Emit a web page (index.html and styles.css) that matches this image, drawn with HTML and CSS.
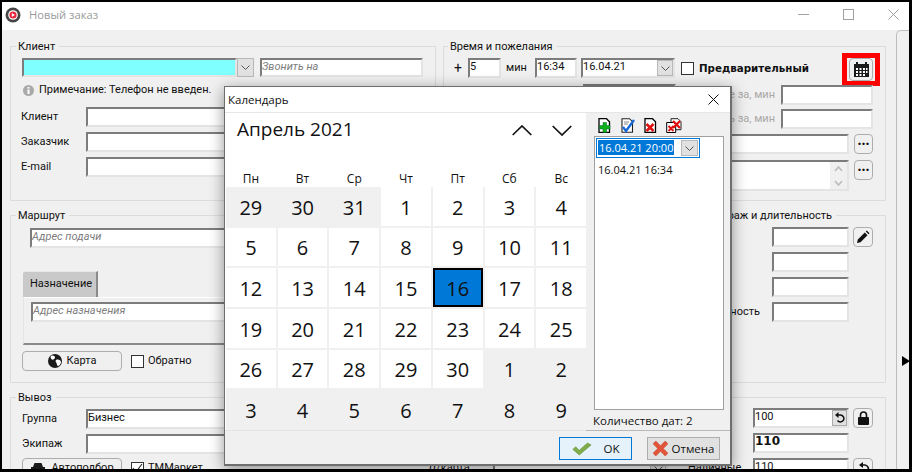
FILE: index.html
```html
<!DOCTYPE html>
<html lang="ru">
<head>
<meta charset="utf-8">
<title>Новый заказ</title>
<link rel="stylesheet" href="styles.css">
</head>
<body>
<div class="window">
  <header class="titlebar">
    <svg class="app-icon" width="16" height="16" viewBox="0 0 16 16"><circle cx="8" cy="8" r="7.500" fill="#464646"/><circle cx="8" cy="8" r="4.800" fill="#fff"/><circle cx="8" cy="8" r="3.600" fill="#e8273f"/><path d="M6.800 6v4l3-2z" fill="#fff"/></svg>
    <span class="title">Новый заказ</span>
    <div class="win-controls">
      <svg width="11" height="11" viewBox="0 0 11 11"><path d="M0 5.500h11" stroke="#a0a0a0"/></svg>
      <svg width="11" height="11" viewBox="0 0 11 11"><rect x=".5" y=".5" width="10" height="10" fill="none" stroke="#a0a0a0"/></svg>
      <svg width="11" height="11" viewBox="0 0 11 11"><path d="M.5.5l10 10M10.500.5l-10 10" stroke="#a0a0a0"/></svg>
    </div>
  </header>

  <div class="body">
    <main class="form">
      <div class="col col-left">
        <section class="group g-client">
          <div class="legend">Клиент</div>
          <div class="row r-phone">
            <div class="inp phone"></div>
            <div class="drop"><svg width="9" height="5" viewBox="0 0 9 5"><path d="M.5.5l4 4 4-4" fill="none" stroke="#555"/></svg></div>
            <div class="inp ph call">Звонить на</div>
          </div>
          <div class="row r-note">
            <svg class="info" width="11" height="11" viewBox="0 0 11 11"><circle cx="5.500" cy="5.500" r="5.500" fill="#a9a9a9"/><rect x="4.500" y="2" width="2" height="1.600" fill="#fff"/><rect x="4.500" y="4.600" width="2" height="4.400" fill="#fff"/></svg>
            <span>Примечание: Телефон не введен.</span>
          </div>
          <div class="row r-field"><label>Клиент</label><div class="inp grow"></div></div>
          <div class="row r-field"><label>Заказчик</label><div class="inp grow"></div></div>
          <div class="row r-field"><label>E-mail</label><div class="inp grow"></div></div>
        </section>

        <section class="group g-route">
          <div class="legend">Маршрут</div>
          <div class="inp ph addr-from">Адрес подачи</div>
          <div class="tab">Назначение</div>
          <div class="tab-panel"><div class="inp ph">Адрес назначения</div></div>
          <div class="row r-map">
            <button class="btn wide"><svg width="14" height="14" viewBox="0 0 14 14"><circle cx="7" cy="7" r="7" fill="#1a1a1a"/><path d="M3 2c2-1 4 0 4 1.500S5 6 4 5.500 2 3 3 2zM8 6c2-1 5 0 5 2s-2 4-3 4-1-2-1.500-3S7 7 8 6z" fill="#fff"/></svg><span>Карта</span></button>
            <span class="check"></span><span>Обратно</span>
          </div>
        </section>

        <section class="group g-pickup">
          <div class="legend">Вывоз</div>
          <div class="row r-field tight"><label>Группа</label><div class="inp grow">Бизнес</div></div>
          <div class="row r-field tight"><label>Экипаж</label><div class="inp grow"></div></div>
          <div class="row r-map low">
            <button class="btn wide"><svg width="16" height="14" viewBox="0 0 16 14"><path d="M3 6l1.500-4h7L13 6h2v6H1V6z" fill="#1a1a1a"/></svg><span>Автоподбор</span></button>
            <span class="check"><svg width="11" height="11" viewBox="0 0 11 11"><path d="M1 5l3 4 6-8" fill="none" stroke="#333" stroke-width="1.200"/></svg></span><span>ТММаркет</span>
          </div>
        </section>
      </div>

      <div class="col col-right">
        <section class="group g-time">
          <div class="legend">Время и пожелания</div>
          <div class="row r-time">
            <span class="plus">+</span>
            <div class="inp mins">5</div>
            <span class="unit">мин</span>
            <div class="inp clock">16:34</div>
            <div class="inp date">16.04.21<span class="drop inner"><svg width="9" height="5" viewBox="0 0 9 5"><path d="M.5.5l4 4 4-4" fill="none" stroke="#555"/></svg></span></div>
            <span class="check"></span>
            <strong class="pre">Предварительный</strong>
            <div class="cal-frame"><button class="square"><svg width="17" height="17" viewBox="0 0 17 17"><path d="M1 3h15v13H1z" fill="#1a1a1a"/><path d="M4 1v3M13 1v3" stroke="#1a1a1a" stroke-width="2"/><path d="M3 7h2v2H3zM6.500 7h2v2h-2zM10 7h2v2h-2zM13 7h1.500v2H13zM3 10h2v2H3zM6.500 10h2v2h-2zM10 10h2v2h-2zM13 10h1.500v2H13zM3 13h2v2H3zM6.500 13h2v2h-2zM10 13h2v2h-2z" fill="#fff"/></svg></button></div>
          </div>
          <div class="row r-sub"><div class="inp under"></div><span class="muted">Напомнить заранее за, мин</span><div class="inp small"></div></div>
          <div class="row r-sub2"><span class="muted">Отправить за, мин</span><div class="inp small"></div></div>
          <div class="row r-more"><div class="inp grow"></div><button class="square dots">···</button></div>
          <div class="row r-more memo"><div class="inp grow memo-box"><span class="scroll"><svg width="9" height="30" viewBox="0 0 9 30"><path d="M1 10l3.500-4L8 10M1 20l3.500 4L8 20" fill="none" stroke="#bbb" stroke-width="1.500"/></svg></span></div><button class="square dots">···</button></div>
        </section>

        <div class="split">
          <section class="group g-mid"></section>
          <section class="group g-metr">
            <div class="legend">Метраж и длительность</div>
            <div class="row r-metr"><div class="inp metr"></div><button class="square"><svg width="14" height="14" viewBox="0 0 14 14"><path d="M1 13l.8-3.500 7-7 2.700 2.700-7 7zM9.800 1.500l1-1 2.700 2.700-1 1z" fill="#111"/></svg></button></div>
            <div class="row r-metr"><div class="inp metr"></div></div>
            <div class="row r-metr"><div class="inp metr"></div></div>
            <div class="row r-metr"><label>Длительность</label><div class="inp metr"></div></div>
          </section>
        </div>

        <section class="group g-pay">
          <div class="pay-cols">
            <div class="pay-left"><span class="cardlabel">Д/карта</span><div class="inp cardsel"><span class="drop inner"><svg width="9" height="5" viewBox="0 0 9 5"><path d="M.5.5l4 4 4-4" fill="none" stroke="#555"/></svg></span></div></div>
            <div class="pay-right">
              <div class="row r-pay"><div class="inp sum">100<span class="reset"><svg width="11" height="12" viewBox="0 0 11 12"><path d="M2 3h4.500a3.500 3.500 0 1 1-3 5.500" fill="none" stroke="#111" stroke-width="1.500"/><path d="M4.500 0v6L1 3z" fill="#111"/></svg></span></div><button class="square"><svg width="13" height="14" viewBox="0 0 13 14"><path d="M3.500 6V4a3 3 0 0 1 6 0v2" fill="none" stroke="#111" stroke-width="1.600"/><rect x="1" y="6" width="11" height="8" rx="1" fill="#111"/></svg></button></div>
              <div class="row r-pay"><div class="inp sum total">110</div></div>
              <div class="row r-pay"><label>Наличные</label><div class="inp sum">110</div><button class="square"><svg width="13" height="13" viewBox="0 0 13 13"><path d="M3 3h5a4 4 0 1 1-4 6" fill="none" stroke="#111" stroke-width="1.600"/><path d="M6 0v6L2 3z" fill="#111"/></svg></button></div>
            </div>
          </div>
        </section>
      </div>
    </main>
    <aside class="side-rail"><svg class="rail-arrow" width="8" height="10" viewBox="0 0 8 10"><path d="M0 0l8 5-8 5z" fill="#000"/></svg></aside>
  </div>

  <div class="dialog">
    <div class="dlg-title"><span>Календарь</span><svg width="11" height="11" viewBox="0 0 11 11"><path d="M.5.5l10 10M10.500.5l-10 10" stroke="#111" stroke-width="1"/></svg></div>
    <div class="dlg-main">
      <div class="calendar">
        <div class="cal-head">
          <span class="month">Апрель 2021</span>
          <div class="arrows">
            <svg width="20" height="11" viewBox="0 0 20 11"><path d="M.7 10L10 1l9.300 9" fill="none" stroke="#111" stroke-width="1.700"/></svg>
            <svg width="20" height="11" viewBox="0 0 20 11"><path d="M.7 1L10 10l9.300-9" fill="none" stroke="#111" stroke-width="1.700"/></svg>
          </div>
        </div>
        <div class="weekdays"><span>Пн</span><span>Вт</span><span>Ср</span><span>Чт</span><span>Пт</span><span>Сб</span><span>Вс</span></div>
        <div class="days">
          <span class="off">29</span><span class="off">30</span><span class="off">31</span><span>1</span><span>2</span><span>3</span><span>4</span>
          <span>5</span><span>6</span><span>7</span><span>8</span><span>9</span><span>10</span><span>11</span>
          <span>12</span><span>13</span><span>14</span><span>15</span><span class="today">16</span><span>17</span><span>18</span>
          <span>19</span><span>20</span><span>21</span><span>22</span><span>23</span><span>24</span><span>25</span>
          <span>26</span><span>27</span><span>28</span><span>29</span><span>30</span><span class="off">1</span><span class="off">2</span>
          <span class="off">3</span><span class="off">4</span><span class="off">5</span><span class="off">6</span><span class="off">7</span><span class="off">8</span><span class="off">9</span>
        </div>
      </div>
      <div class="dates">
        <div class="tools">
          <svg width="14" height="15" viewBox="0 0 14 15"><path d="M1 .7h7.500l3 3v10.600H1z" fill="#fff" stroke="#000" stroke-width="1.300"/><path d="M5 4.500h3.500v3H12v3.500H8.500v3.500H5V11H1.500V7.500H5z" fill="#0fb01a" stroke="#063" stroke-width=".5"/></svg>
          <svg width="14" height="15" viewBox="0 0 14 15"><path d="M1 .7h7.500l3 3v10.600H1z" fill="#fff" stroke="#222" stroke-width="1.100"/><path d="M3 4h5M3 6h4" stroke="#888"/><path d="M2 9l3 4 8-11" fill="none" stroke="#1668d8" stroke-width="2.300"/></svg>
          <svg width="13" height="15" viewBox="0 0 13 15"><path d="M1 .7h7.500l3 3v10.600H1z" fill="#fff" stroke="#000" stroke-width="1.300"/><path d="M2.500 6l7 7M9.500 6l-7 7" stroke="#e01010" stroke-width="2.500"/></svg>
          <svg width="16" height="15" viewBox="0 0 16 15"><path d="M5 .7h7l3 3v8H5z" fill="#fff" stroke="#222"/><path d="M.7 4.500h7l2 2v8h-9z" fill="#fff" stroke="#000"/><path d="M7 3l7 7M14 3l-7 7" stroke="#e01010" stroke-width="2.300"/><path d="M2.500 8l5 5M7.500 8l-5 5" stroke="#e01010" stroke-width="1.800"/></svg>
        </div>
        <div class="listbox">
          <div class="date-edit"><span class="sel">16.04.21 20:00</span><span class="drop inner"><svg width="9" height="5" viewBox="0 0 9 5"><path d="M.5.5l4 4 4-4" fill="none" stroke="#555"/></svg></span></div>
          <div class="date-item">16.04.21 16:34</div>
        </div>
        <div class="count">Количество дат: 2</div>
      </div>
    </div>
    <div class="dlg-foot">
      <button class="dlg-btn ok"><svg width="20" height="14" viewBox="0 0 22 15"><path d="M1 8l3-3 4 4 9-8 4 2-13 11z" fill="#7fae4a" stroke="#5c8a30" stroke-width=".6"/></svg><span>OK</span></button>
      <button class="dlg-btn cancel"><svg width="15" height="15" viewBox="0 0 16 16"><path d="M3 0l5 5 5-5 3 3-5 5 5 5-3 3-5-5-5 5-3-3 5-5-5-5z" fill="#e2553a" stroke="#c03a20" stroke-width=".5"/></svg><span>Отмена</span></button>
    </div>
  </div>
</div>
</body>
</html>
```

FILE: styles.css
```css
* { box-sizing: border-box; }
html, body { margin: 0; height: 100%; overflow: hidden; }
body {
  background: #000;
  padding: 2px 2px 3px 2px;
  font: 11.5px/14px "Open Sans", "Noto Sans", sans-serif;
  color: #111;
}
.window {
  position: relative;
  width: 907px;
  height: 467px;
  overflow: hidden;
  background: #f0f0f0;
  display: flex;
  flex-direction: column;
}
.titlebar {
  flex: none;
  height: 28px;
  background: #fff;
  display: flex;
  align-items: center;
  padding: 0 10px 3px 3px;
  color: #9a9a9a;
}
.app-icon { margin-right: 8px; }
.title { font-size: 11.200px; margin-top: 1px; }
.win-controls { margin-left: auto; display: flex; gap: 34px; }
.body { flex: 1; display: flex; min-height: 0; }
.form {
  width: 894px;
  padding: 16px 0 0 8px;
  display: grid;
  grid-template-columns: 426px 443px;
  column-gap: 7px;
  align-items: start;
  font-family: Roboto, "Open Sans", sans-serif;
  font-size: 11px;
}
.col { display: flex; flex-direction: column; gap: 14px; }
.side-rail {
  flex: 1;
  border-left: 1px solid #bdbdbd;
  border-top: 1px solid #bdbdbd;
  border-top-left-radius: 5px;
  position: relative;
}
.rail-arrow { position: absolute; left: 5px; top: 325px; }
.group { border: 1px solid #dcdcdc; padding: 0 7px; }
.legend {
  width: max-content;
  background: #f0f0f0;
  padding: 0 4px 0 2px;
  margin: -7px 0 0 -1px;
  height: 14px;
}
.row { display: flex; align-items: center; }
.inp {
  height: 20px;
  background: #fff;
  border: 2px solid;
  border-color: #7c7c7c #e4e4e4 #e4e4e4 #7c7c7c;
  line-height: 13px;
  white-space: nowrap;
  position: relative;
}
.grow { flex: 1; min-width: 0; }
.ph { color: #7d7d7d; font-style: italic; }
.drop {
  width: 17px;
  height: 19px;
  background: #e1e1e1;
  border: 1px solid #b8b8b8;
  display: flex;
  align-items: center;
  justify-content: center;
}
.drop.inner { position: absolute; right: 0; top: 0; height: 16px; width: 16px; }
.check {
  width: 13px;
  height: 13px;
  background: #fff;
  border: 1px solid #333;
  flex: none;
  display: inline-flex;
}
.square {
  width: 20px;
  height: 20px;
  padding: 0;
  background: #f0f0f0;
  border: 1px solid #adadad;
  border-radius: 4px;
  display: inline-flex;
  align-items: center;
  justify-content: center;
  flex: none;
}
.dots { font: bold 14px/14px "Open Sans", sans-serif; color: #111; }
.btn {
  height: 20px;
  background: #f0f0f0;
  border: 1px solid #adadad;
  border-radius: 4px;
  display: inline-flex;
  align-items: center;
  justify-content: center;
  gap: 5px;
  padding: 0;
  font: inherit;
  color: #111;
}
.wide { width: 100px; }

/* client */
.g-client { height: 155px; padding-left: 11px; }
.g-client .legend, .g-pickup .legend { margin-left: -6px; }
.g-route .legend { margin-left: -7px; }
.r-phone { margin-top: 4px; }
.phone { width: 215px; background: #7fffff; height: 19px; }
.call { width: 163px; margin-left: 6px; height: 19px; }
.r-note { margin: 6px 0 0 1px; height: 14px; gap: 5px; }
.r-field { margin-top: 5px; }
.r-note + .r-field { margin-top: 10px; }
.r-field label { width: 64px; }
.g-client .r-field label { margin-left: -1px; width: 65px; }

/* route */
.g-route { height: 168px; padding-left: 12px; padding-right: 0; }
.addr-from { margin-top: 5px; margin-right: 10px; height: 20px; margin-left: 7px; }
.tab {
  width: 75px;
  height: 26px;
  margin-top: 23px;
  background: #c9c9c9;
  border-top-left-radius: 2px;
  border-right: 2px solid #8a8a8a;
  border-top: 1px solid #e8e8e8;
  line-height: 24px;
  padding-left: 7px;
  position: relative;
}
.tab-panel {
  height: 48px;
  border-top: 1px solid #fff;
  border-left: 1px solid #e4e4e4;
  border-bottom: 2px solid #8a8a8a;
  padding: 4px 10px 0 7px;
}
.r-map { margin-top: 6px; }
.r-map > .check { margin-left: 9px; margin-right: 4px; }
.g-route .r-map { margin-left: -1px; }
.g-pickup { height: 90px; padding-left: 11px; }
.r-field.tight { margin-top: 5px; }
.legend + .r-field.tight { margin-top: 4px; }
.low { margin-top: 4px; }

/* time */
.g-time { height: 155px; padding: 0 12px 0 5px; position: relative; }
.r-time { height: 20px; margin-top: 4px; }
.plus { width: 14px; padding-left: 5px; margin-right: 5px; font-size: 14px; }
.mins { width: 33px; }
.unit { width: 34px; padding-left: 5px; }
.clock { width: 42px; margin-right: 4px; }
.date { width: 94px; }
.r-time .check { margin-left: 6px; margin-right: 5px; }
.pre { font-family: "DejaVu Sans", sans-serif; font-size: 10.300px; font-weight: 700; white-space: nowrap; }
.cal-frame {
  margin-left: auto;
  width: 38px;
  height: 33px;
  border: 5px solid #f00;
  margin-right: -7px;
  position: relative;
  top: 1px;
  display: flex;
  align-items: center;
  justify-content: center;
  flex: none;
}
.cal-frame .square { width: 24px; height: 23px; }
.r-sub { margin-top: 7px; justify-content: flex-end; position: relative; height: 20px; }
.under { position: absolute; left: 134px; top: -1px; width: 93px; }
.muted { color: #a9a9a9; margin-right: 6px; white-space: nowrap; }
.small { width: 92px; }
.r-sub2 { justify-content: flex-end; margin-top: 4px; }
.r-more { margin-top: 5px; justify-content: flex-end; gap: 5px; height: 20px; }
.r-more .square { height: 20px; width: 19px; }
.memo { height: 31px; align-items: flex-start; margin-top: 6px; }
.memo-box { height: 31px; }
.scroll { position: absolute; right: 0; top: 0; bottom: 0; width: 17px; background: #f0f0f0; display: flex; align-items: center; justify-content: center; }

/* right mid */
.split { display: flex; gap: 8px; height: 168px; }
.g-mid { flex: 1; }
.g-metr { width: 187px; padding: 0 12px 0 0; flex: none; }
.g-metr .legend { margin-left: 0; padding-left: 7px; }
.r-metr { margin-top: 5px; justify-content: flex-end; position: relative; padding-right: 24px; }
.legend + .r-metr { margin-top: 4px; }
.r-metr .square { position: absolute; right: 0; top: 0; }
.r-metr label { position: absolute; right: 113px; top: 3px; white-space: nowrap; }
.metr { width: 77px; }

/* pay */
.g-pay { height: 90px; padding: 0 12px 0 5px; }
.pay-cols { display: flex; justify-content: space-between; }
.pay-left { display: flex; margin: 60px 0 0 -21px; width: 240px; }
.cardlabel { margin-top: 3px; width: 65px; flex: none; }
.cardsel { width: 175px; }
.pay-right { width: 185px; margin-top: 10px; }
.r-pay { margin-top: 5px; position: relative; justify-content: flex-end; padding-right: 24px; }
.r-pay:first-child { margin-top: 0; }
.r-pay label { position: absolute; left: 0; top: 3px; }
.r-pay .square { position: absolute; right: 0; top: 0; }
.sum { width: 96px; }
.total { font-weight: 700; font-size: 12px; font-family: "DejaVu Sans", sans-serif; }
.reset {
  position: absolute;
  right: 0;
  top: 0;
  width: 15px;
  height: 16px;
  background: #e1e1e1;
  border: 1px solid #aaa;
  display: flex;
  align-items: center;
  justify-content: center;
}

/* dialog */
.dialog {
  position: absolute;
  left: 222px;
  top: 84px;
  width: 508px;
  height: 380px;
  background: #f0f0f0;
  border: 1px solid #6e6e6e;
  border-width: 1px 2px 2px 1px;
  box-shadow: 0 3px 14px rgba(0, 0, 0, .42);
  display: flex;
  flex-direction: column;
}
.dlg-title {
  height: 26px;
  flex: none;
  background: #fff;
  display: flex;
  align-items: center;
  justify-content: space-between;
  padding: 0 11px 0 3px;
  border-bottom: 1px solid #e6e6e6;
}
.dlg-main { display: flex; height: 318px; flex: none; }
.calendar { width: 361px; background: #fff; padding-left: 1px; flex: none; border-bottom: 1px solid #e4e4e4; }
.cal-head {
  height: 52px;
  display: flex;
  align-items: flex-start;
  justify-content: space-between;
  padding: 2px 14px 0 11px;
}
.month { font-size: 19px; line-height: 29px; }
.arrows { display: flex; gap: 20px; margin-top: 10px; }
.weekdays {
  height: 22px;
  display: grid;
  grid-template-columns: repeat(7, 1fr);
  gap: 2px;
  text-align: center;
  font-size: 12px;
  line-height: 28px;
}
.days {
  display: grid;
  grid-template-columns: repeat(7, 1fr);
  grid-template-rows: repeat(6, 1fr);
  gap: 2px;
  height: 243px;
  padding-bottom: 1px;
  background: #f0f0f0;
  font-size: 20px;
}
.days span { background: #fff; display: flex; align-items: center; justify-content: center; padding-top: 3px; }
.days .off { background: #f0f0f0; }
.days .today { background: #0078d7; box-shadow: inset 0 0 0 2px #000; }
.dates { flex: 1; padding: 0 0 0 8px; border-bottom: 1px solid #b8b8b8; position: relative; }
.tools { height: 23px; display: flex; gap: 9px; align-items: center; padding: 1px 0 0 4px; }
.listbox { width: 130px; height: 274px; background: #fff; border: 1px solid #a0a0a0; }
.date-edit {
  position: relative;
  width: 104px;
  height: 20px;
  margin: 1px;
  border: 1px solid #0078d7;
  padding: 1px 0 0 1px;
  background: #fff;
  font-size: 11px;
}
.date-edit .drop { top: 1px; right: 1px; height: 16px; width: 17px; }
.sel { background: #0078d7; color: #fff; display: inline-block; line-height: 15px; padding: 0 1px; white-space: nowrap; }
.date-item { padding: 4px 0 0 3px; white-space: nowrap; font-size: 11px; }
.count { margin: 4px 0 0 -1px; white-space: nowrap; }
.dlg-foot { flex: 1; display: flex; justify-content: flex-end; gap: 15px; padding: 6px 10px 0 0; }
.dlg-btn {
  width: 73px;
  height: 23px;
  font: inherit;
  color: #111;
  padding: 0;
  display: inline-flex;
  align-items: center;
  justify-content: center;
}
.ok { background: #e5f1fb; border: 1px solid #0078d7; gap: 12px; }
.cancel { background: #e1e1e1; border: 1px solid #adadad; gap: 4px; }
```
